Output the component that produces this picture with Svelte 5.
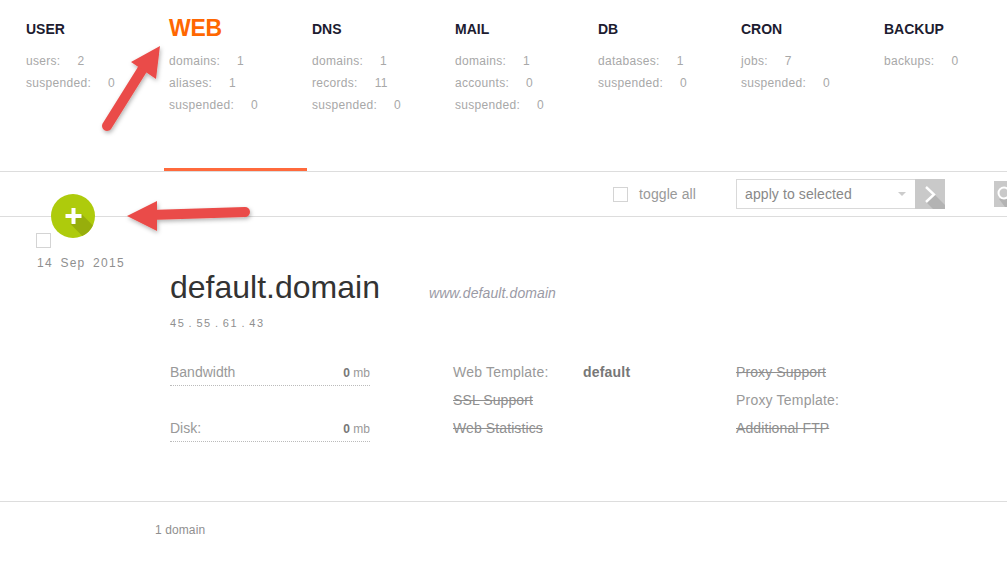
<script>
  const tabs = [
    { name: 'USER', rows: [['users:', '2'], ['suspended:', '0']] },
    { name: 'WEB', active: true, rows: [['domains:', '1'], ['aliases:', '1'], ['suspended:', '0']] },
    { name: 'DNS', rows: [['domains:', '1'], ['records:', '11'], ['suspended:', '0']] },
    { name: 'MAIL', rows: [['domains:', '1'], ['accounts:', '0'], ['suspended:', '0']] },
    { name: 'DB', rows: [['databases:', '1'], ['suspended:', '0']] },
    { name: 'CRON', rows: [['jobs:', '7'], ['suspended:', '0']] },
    { name: 'BACKUP', rows: [['backups:', '0']] }
  ];
</script>

<div class="page">
  <nav class="tabs">
    {#each tabs as t}
      <div class="tab" class:active={t.active}>
        <h4>{t.name}</h4>
        {#each t.rows as r}
          <p><span>{r[0]}</span><span class="val">{r[1]}</span></p>
        {/each}
      </div>
    {/each}
  </nav>

  <div class="toolbar">
    <span class="check"></span>
    <span class="toggle">toggle all</span>
    <div class="select">apply to selected<i class="caret"></i></div>
    <div class="go">
      <svg width="30" height="30" viewBox="0 0 30 30">
        <path d="M20 16 L30 26 L30 30 L18 30 L11 23 Z" fill="#b3b3b3" />
        <path d="M11 8 L19 15.5 L11 23" fill="none" stroke="#fff" stroke-width="2.4" />
      </svg>
    </div>
    <div class="search">
      <svg width="13" height="26" viewBox="0 0 13 26">
        <path d="M13 16 L13 26 L11 26 L5 18 Z" fill="#b3b3b3" />
        <circle cx="10" cy="12" r="5.5" fill="#c9c9c9" stroke="#fff" stroke-width="2" />
      </svg>
    </div>
  </div>

  <div class="row">
    <div class="side">
      <span class="check"></span>
      <div class="date">14 Sep 2015</div>
    </div>
    <div class="main">
      <div class="title">
        <h1>default.domain</h1>
        <em>www.default.domain</em>
      </div>
      <div class="ip">45 . 55 . 61 . 43</div>
      <div class="cols">
        <div class="stats">
          <div class="stat"><span>Bandwidth</span><small><b>0</b> mb</small></div>
          <div class="stat"><span>Disk:</span><small><b>0</b> mb</small></div>
        </div>
        <div class="opts two">
          <div class="opt"><span class="lab">Web Template:</span><b>default</b></div>
          <div class="opt"><s>SSL Support</s></div>
          <div class="opt"><s>Web Statistics</s></div>
        </div>
        <div class="opts">
          <div class="opt"><s>Proxy Support</s></div>
          <div class="opt">Proxy Template:</div>
          <div class="opt"><s>Additional FTP</s></div>
        </div>
      </div>
    </div>
  </div>

  <div class="foot">1 domain</div>

  <button class="add" aria-label="add">
    <svg width="44" height="44" viewBox="0 0 44 44">
      <circle cx="22" cy="22" r="22" fill="#aecb0c" />
      <path d="M30 19.5 L41.9 31.4 A22 22 0 0 1 31.4 41.9 L19.5 30 Z" fill="#97ae0c" />
      <path d="M20.5 14 h4 v6 h6 v4 h-6 v6 h-4 v-6 h-6 v-4 h6 z" fill="#fff" />
    </svg>
  </button>

  <svg class="arrows" width="300" height="240" viewBox="0 0 300 240">
    <defs>
      <filter id="sh" x="-20%" y="-20%" width="150%" height="150%">
        <feDropShadow dx="1" dy="2" stdDeviation="2" flood-color="#000" flood-opacity="0.3" />
      </filter>
    </defs>
    <g filter="url(#sh)" fill="#ea4c48" stroke="#ea4c48">
      <path d="M107 126 L142 70" stroke-width="10" stroke-linecap="round" fill="none" />
      <path d="M160 46 L131 62 L156 79 Z" stroke-width="0" />
      <path d="M245 212 L150 215" stroke-width="10" stroke-linecap="round" fill="none" />
      <path d="M127 216 L157 201 L157 231 Z" stroke-width="0" />
    </g>
  </svg>
</div>

<style>
  :global(body) {
    margin: 0;
    background: #fff;
  }
  .page {
    position: relative;
    width: 1007px;
    height: 562px;
    overflow: hidden;
    font-family: "Liberation Sans", Arial, sans-serif;
    color: #9a9a9a;
  }
  .tabs {
    display: flex;
    height: 171px;
    padding-left: 21px;
    box-sizing: border-box;
  }
  .tab {
    width: 143px;
    flex: none;
    box-sizing: border-box;
    height: 171px;
    padding: 22px 0 0 5px;
  }
  .tab.active {
    border-bottom: 3px solid #ff6a3c;
    padding-top: 14px;
  }
  h4 {
    margin: 0 0 14px;
    font-size: 14px;
    line-height: 14px;
    font-weight: 700;
    color: #1d1c30;
  }
  .active h4 {
    font-size: 23px;
    line-height: 28px;
    color: #ff6701;
    letter-spacing: -0.3px;
    margin-bottom: 8px;
  }
  .tab p {
    margin: 0;
    font-size: 12px;
    line-height: 22px;
    color: #a8a8a8;
    letter-spacing: 0.3px;
    white-space: nowrap;
  }
  .val {
    margin-left: 17px;
  }
  .toolbar {
    display: flex;
    align-items: center;
    border-top: 1px solid #ddd;
    border-bottom: 1px solid #ddd;
    padding-left: 613px;
    box-sizing: border-box;
    height: 46px;
  }
  .check {
    display: block;
    width: 13px;
    height: 13px;
    border: 1px solid #d4d4d4;
    flex: none;
  }
  .toggle {
    margin-left: 11px;
    font-size: 14px;
    letter-spacing: 0.1px;
    color: #999;
    width: 97px;
    flex: none;
  }
  .select {
    position: relative;
    width: 170px;
    height: 28px;
    border: 1px solid #d9d9d9;
    border-right: 0;
    font-size: 14px;
    line-height: 28px;
    letter-spacing: 0.1px;
    padding-left: 8px;
    color: #888;
    flex: none;
  }
  .caret {
    position: absolute;
    right: 9px;
    top: 12px;
    border: 4px solid transparent;
    border-top: 4px solid #ccc;
    border-bottom: 0;
  }
  .go {
    width: 30px;
    height: 30px;
    background: #c9c9c9;
    flex: none;
    overflow: hidden;
  }
  .go svg, .search svg {
    display: block;
  }
  .search {
    margin-left: 49px;
    width: 13px;
    height: 26px;
    background: #c9c9c9;
    flex: none;
  }
  .row {
    display: flex;
    height: 285px;
    border-bottom: 1px solid #ddd;
    box-sizing: border-box;
    padding-top: 16px;
  }
  .side {
    width: 170px;
    flex: none;
    padding-left: 36px;
    box-sizing: border-box;
  }
  .date {
    margin-top: 8px;
    margin-left: 1px;
    font-size: 12px;
    line-height: 14px;
    letter-spacing: 1.25px;
    word-spacing: 3px;
    color: #8f8f8f;
    white-space: nowrap;
  }
  .title {
    display: flex;
    align-items: baseline;
    margin-top: 36px;
  }
  h1 {
    margin: 0;
    font-size: 32px;
    line-height: 36px;
    font-weight: 400;
    color: #333;
  }
  .title em {
    margin-left: 49px;
    font-size: 14px;
    letter-spacing: 0.1px;
    color: #9a9aa5;
  }
  .ip {
    margin-top: 11px;
    font-size: 11px;
    line-height: 14px;
    letter-spacing: 1.6px;
    word-spacing: -1.5px;
    color: #8f8f8f;
  }
  .cols {
    display: flex;
    margin-top: 28px;
  }
  .stats {
    width: 283px;
    flex: none;
  }
  .stat {
    display: flex;
    justify-content: space-between;
    align-items: baseline;
    width: 200px;
    height: 27px;
    line-height: 28px;
    font-size: 14px;
    color: #999;
    border-bottom: 1px dotted #bbb;
    margin-bottom: 28px;
  }
  .stat small {
    font-size: 12px;
  }
  .stat b {
    color: #777;
  }
  .opts {
    font-size: 14px;
    letter-spacing: 0.2px;
    color: #999;
  }
  .opts.two {
    width: 283px;
    flex: none;
  }
  .opt {
    height: 28px;
    line-height: 28px;
    white-space: nowrap;
  }
  .opt s {
    color: #8f8f8f;
    letter-spacing: 0.1px;
  }
  .lab {
    display: inline-block;
    width: 130px;
  }
  .opt b {
    color: #777;
    font-size: 14px;
    letter-spacing: 0.2px;
  }
  .foot {
    margin-top: 21px;
    padding-left: 155px;
    font-size: 12px;
    letter-spacing: 0.1px;
    line-height: 14px;
    color: #8f8f8f;
  }
  .add {
    position: absolute;
    left: 51px;
    top: 194px;
    width: 44px;
    height: 44px;
    padding: 0;
    border: 0;
    background: none;
  }
  .add svg {
    display: block;
  }
  .arrows {
    position: absolute;
    left: 0;
    top: 0;
    pointer-events: none;
  }
</style>
